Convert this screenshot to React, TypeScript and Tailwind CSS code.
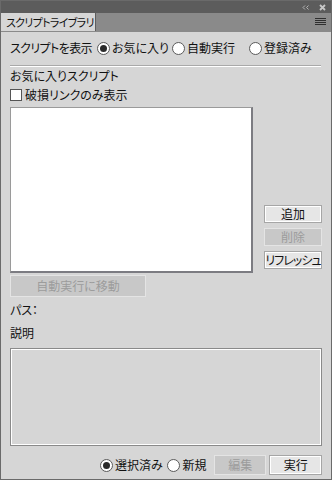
import React from 'react';

const font = "font-['Noto_Sans_CJK_JP',sans-serif] [font-feature-settings:'palt']";

function Radio({ checked, label, className = '' }: { checked?: boolean; label: string; className?: string }) {
  return (
    <div className={`flex items-center h-[16px] whitespace-nowrap ${className}`}>
      <span className="w-[13px] h-[13px] rounded-full bg-white border border-[#5a5a5a] flex items-center justify-center shrink-0">
        {checked && <span className="w-[7px] h-[7px] rounded-full bg-[#2a2a2a]" />}
      </span>
      <span className="ml-[2px] leading-none">{label}</span>
    </div>
  );
}

function Button({ label, disabled, className = '' }: { label: string; disabled?: boolean; className?: string }) {
  return (
    <div
      className={`flex items-center justify-center border leading-none whitespace-nowrap ${
        disabled
          ? 'bg-[#c8c8c8] border-[#e4e4e4] text-[#9c9c9c]'
          : 'bg-[#e6e6e6] border-[#a6a6a6] text-[#111] shadow-[inset_0_0_0_1px_#ffffff]'
      } ${className}`}
    >
      {label}
    </div>
  );
}

export default function App() {
  return (
    <div className={`w-[332px] h-[480px] bg-[#d6d6d6] border border-[#6a6a6a] flex flex-col text-[12px] text-[#111] ${font}`}>
      {/* Title bar */}
      <div className="h-[12px] bg-[#5c5c5c] flex items-center justify-end pr-[5px] gap-[10px]">
        <svg width="7" height="5" viewBox="0 0 7 5">
          <path d="M3 0.5L1 2.5L3 4.5M6.5 0.5L4.5 2.5L6.5 4.5" stroke="#b4b4b4" strokeWidth="1" fill="none" />
        </svg>
        <svg width="7" height="7" viewBox="0 0 7 7">
          <path d="M1 1L6 6M6 1L1 6" stroke="#c8c8c8" strokeWidth="1.8" />
        </svg>
      </div>
      {/* Tab row */}
      <div className="h-[19px] bg-[#8a8a8a] flex items-stretch border-b border-[#8a8a8a]">
        <div className="w-[95px] bg-[#d6d6d6] border-r border-[#5e5e5e] flex items-center pl-[5px] leading-none whitespace-nowrap text-[11px] tracking-[-0.7px]">
          スクリプトライブラリ
        </div>
        <div className="flex-1 flex items-center justify-end pr-[5px]">
          <svg width="11" height="8" viewBox="0 0 11 8">
            <path d="M0 0.5H11M0 2.5H11M0 4.5H11M0 6.5H11" stroke="#2e2e2e" strokeWidth="1" />
          </svg>
        </div>
      </div>

      <div className="flex flex-col px-[9px]">
        {/* Show scripts */}
        <div className="mt-[8px] flex items-center h-[16px]">
          <span className="w-[87px] leading-none whitespace-nowrap tracking-[-0.6px]">スクリプトを表示</span>
          <Radio checked label="お気に入り" className="w-[75px]" />
          <Radio label="自動実行" className="w-[77px]" />
          <Radio label="登録済み" />
        </div>

        <div className="mt-[9px] h-[2px] border-t border-[#a9a9a9] border-b border-b-white mr-[1px]" />

        <div className="mt-[1px] h-[16px] flex items-center leading-none whitespace-nowrap">お気に入りスクリプト</div>
        <div className="mt-[3px] h-[16px] flex items-center">
          <span className="w-[12px] h-[12px] bg-white border border-[#555] shrink-0" />
          <span className="ml-[3px] leading-none whitespace-nowrap">破損リンクのみ表示</span>
        </div>

        {/* List + side buttons */}
        <div className="mt-[4px] flex">
          <div className="w-[243px] h-[166px] bg-white border border-[#9a9a9a] border-r-[#7c7c82] border-r-2 border-b-2 border-b-[#7c7c82]" />
          <div className="ml-[11px] flex flex-col self-end mb-[4px] gap-[5px]">
            <Button label="追加" className="w-[58px] h-[18px]" />
            <Button label="削除" disabled className="w-[58px] h-[18px]" />
            <Button label="リフレッシュ" className="w-[58px] h-[18px] tracking-[-1px]" />
          </div>
        </div>

        <Button label="自動実行に移動" disabled className="mt-[2px] w-[136px] h-[22px]" />

        <div className="mt-[5px] h-[16px] flex items-center leading-none">パス：</div>
        <div className="mt-[7px] h-[16px] flex items-center leading-none">説明</div>

        <div className="mt-[7px] w-[312px] h-[98px] border border-[#8a8a8a] shadow-[inset_0_0_0_1px_#ffffff] bg-[#d6d6d6]" />

        {/* Bottom row */}
        <div className="mt-[9px] flex items-center h-[20px]">
          <Radio checked label="選択済み" className="ml-[90px] w-[68px]" />
          <Radio label="新規" className="w-[47px]" />
          <Button label="編集" disabled className="w-[53px] h-[20px]" />
          <Button label="実行" className="ml-[3px] w-[53px] h-[20px]" />
        </div>
      </div>
    </div>
  );
}
